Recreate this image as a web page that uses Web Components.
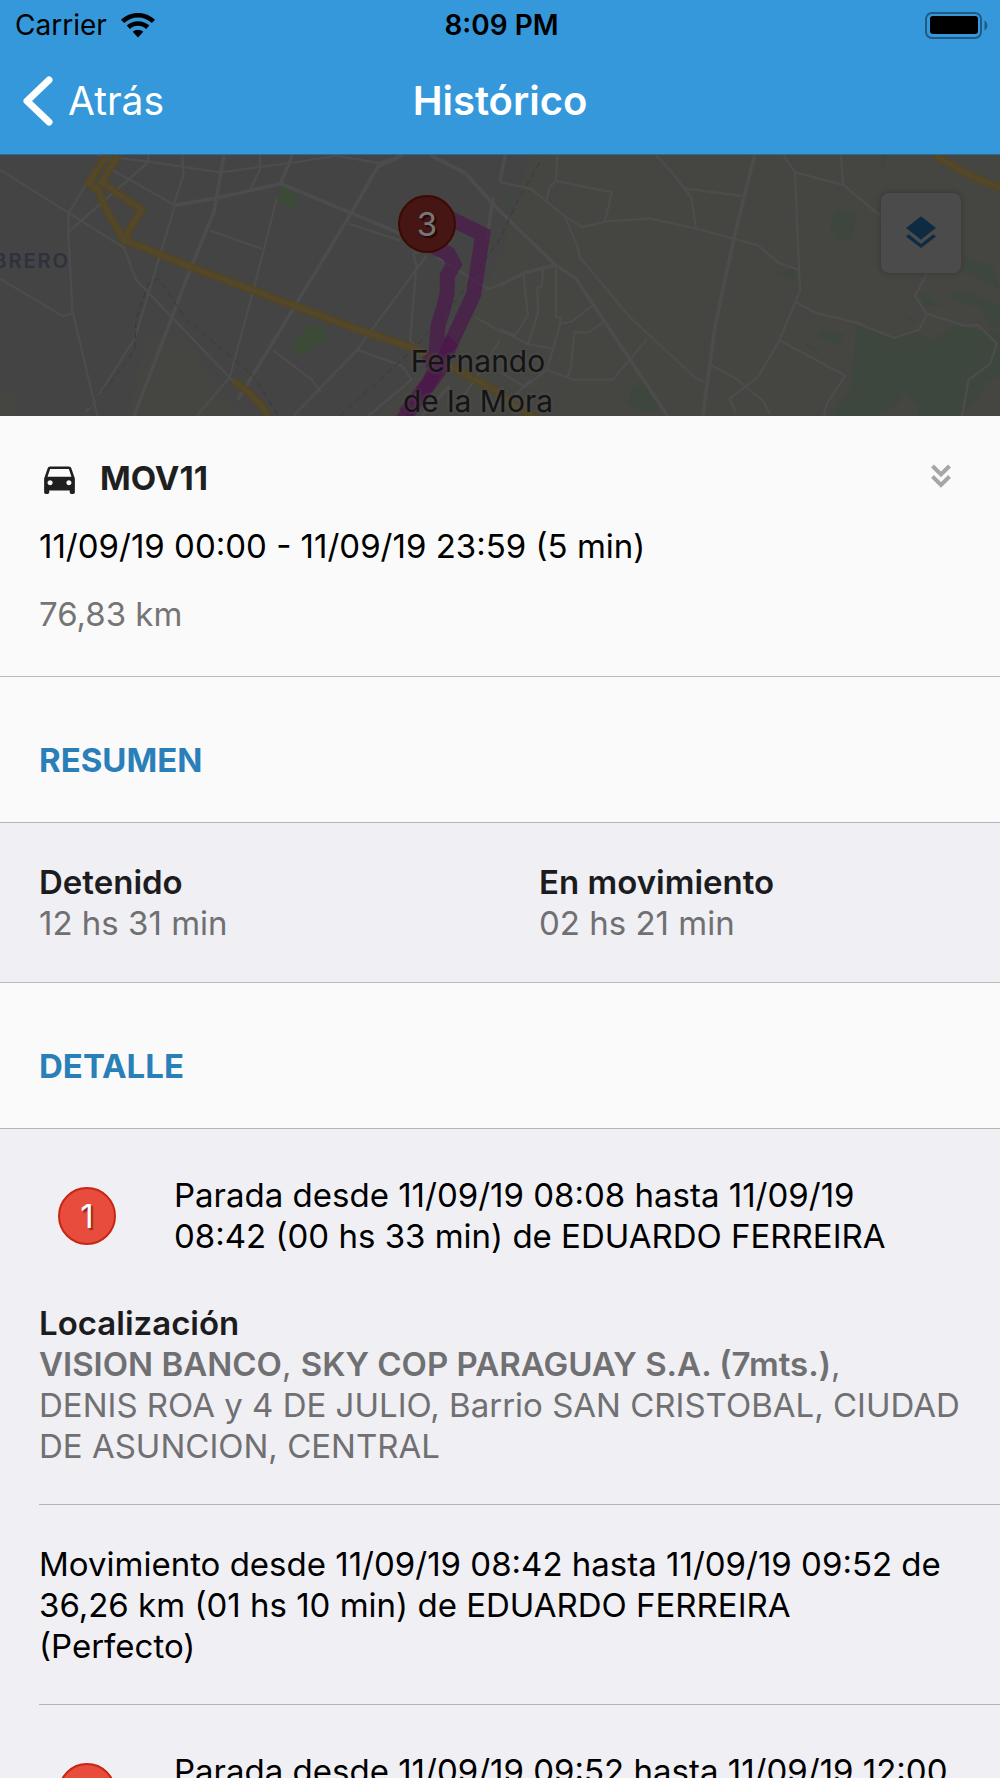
<!DOCTYPE html>
<html lang="es">
<head>
<meta charset="utf-8">
<meta name="viewport" content="width=device-width, initial-scale=1">
<title>Histórico</title>
<style>
    body {
        margin: 0;
        background: #efeff4;
        color: #000;
        font-family: Inter, "Liberation Sans", sans-serif;
        font-size: 33px;
        line-height: 41px;
    }
</style>
</head>
<body>
<history-page>
    <status-bar slot="header" carrier="Carrier" time="8:09 PM"></status-bar>
    <nav-header slot="header" back="Atrás">Histórico</nav-header>
    <route-map slot="map"></route-map>

    <trip-summary>
        MOV11
        <span slot="period">11/09/19 00:00 - 11/09/19 23:59 (5 min)</span>
        <span slot="distance">76,83 km</span>
    </trip-summary>

    <section-title>RESUMEN</section-title>
    <stat-row>
        <stat-item label="Detenido">12 hs 31 min</stat-item>
        <stat-item label="En movimiento">02 hs 21 min</stat-item>
    </stat-row>

    <section-title>DETALLE</section-title>
    <stop-item number="1">
        Parada desde 11/09/19 08:08 hasta 11/09/19<br>
        08:42 (00 hs 33 min) de EDUARDO FERREIRA
        <stat-item slot="location" label="Localización"><b>VISION BANCO</b>, <b>SKY COP PARAGUAY S.A. (7mts.)</b>,<br>
            DENIS ROA y 4 DE JULIO, Barrio SAN CRISTOBAL, CIUDAD DE ASUNCION, CENTRAL</stat-item>
    </stop-item>
    <move-item>
        Movimiento desde 11/09/19 08:42 hasta 11/09/19 09:52 de
        36,26 km (01 hs 10 min) de EDUARDO FERREIRA<br>
        (Perfecto)
    </move-item>
    <stop-item number="2">Parada desde 11/09/19 09:52 hasta 11/09/19 12:00</stop-item>
</history-page>

<script>
// attaches an open shadow root filled with the given markup
class BaseElement extends HTMLElement {
    constructor() {
        super();
        const template = document.createElement("template");
        template.innerHTML = this.constructor.markup;
        this.attachShadow({ mode: "open" });
        this.shadowRoot.appendChild(template.content.cloneNode(true));
    }

    // copies an attribute into the element with the same id
    fill(name) {
        this.shadowRoot.getElementById(name).textContent = this.getAttribute(name) || "";
    }
}

class HistoryPage extends BaseElement {
    static markup = `
        <style>
            :host {
                display: flex;
                flex-direction: column;
                height: 100vh;
                overflow: hidden;
            }
            header {
                background: #3498db;
                border-bottom: 1px solid #296d98;
            }
            main {
                flex: 1;
                min-height: 0;
                overflow-y: auto;
                scrollbar-width: none;
                background: #efeff4;
            }
        </style>
        <header><slot name="header"></slot></header>
        <slot name="map"></slot>
        <main><slot></slot></main>
    `;
}

class StatusBar extends BaseElement {
    static markup = `
        <style>
            :host {
                display: grid;
                grid-template-columns: 1fr auto 1fr;
                align-items: center;
                height: 50px;
                padding: 0 12px 0 15px;
                font-size: 28px;
                line-height: 34px;
            }
            .left {
                display: flex;
                align-items: center;
                gap: 14px;
            }
            #time {
                font-weight: 600;
            }
            .battery {
                justify-self: end;
            }
            svg {
                display: block;
            }
        </style>
        <div class="left">
            <span id="carrier"></span>
            <svg width="34" height="25" viewBox="0 0 34 25">
                <path d="M17 0C10.500 0 4.600 2.500 0 6.700L3.200 10A20 20 0 0 1 30.800 10L34 6.700C29.400 2.500 23.500 0 17 0z"/>
                <path d="M17 8.200c-4.400 0-8.300 1.700-11.300 4.400l3.200 3.300a12 12 0 0 1 16.200 0l3.200-3.300C25.300 9.900 21.400 8.200 17 8.200z"/>
                <path d="M17 16.700c-2 0-3.900.8-5.300 2L17 24.500l5.300-5.800c-1.400-1.200-3.300-2-5.300-2z"/>
            </svg>
        </div>
        <span id="time"></span>
        <svg class="battery" width="63" height="27" viewBox="0 0 63 27">
            <rect x="1" y="1" width="55" height="25" rx="6" fill="none" stroke="#1f5b83" stroke-width="2"/>
            <rect x="5" y="4" width="48" height="18" rx="3"/>
            <path d="M59.500 8.500c3.800 2 3.800 8 0 10z" fill="#1f5b83"/>
        </svg>
    `;

    connectedCallback() {
        this.fill("carrier");
        this.fill("time");
    }
}

class NavHeader extends BaseElement {
    static markup = `
        <style>
            :host {
                display: grid;
                grid-template-columns: 1fr auto 1fr;
                align-items: center;
                height: 104px;
                box-sizing: border-box;
                padding: 0 23px 3px;
                color: #fff;
                font-size: 39px;
                line-height: 50px;
            }
            button {
                display: flex;
                align-items: center;
                gap: 15px;
                justify-self: start;
                padding: 0;
                border: 0;
                background: none;
                color: inherit;
                font: inherit;
            }
            h1 {
                margin: 0;
                font-size: 40px;
                font-weight: 600;
            }
        </style>
        <button type="button">
            <svg width="30" height="50" viewBox="0 0 30 50"><path d="M26 4 4 25l22 21" fill="none" stroke="#fff" stroke-width="7" stroke-linecap="round" stroke-linejoin="round"/></svg>
            <span id="back"></span>
        </button>
        <h1><slot></slot></h1>
    `;

    connectedCallback() {
        this.fill("back");
    }
}

class StopMarker extends BaseElement {
    static markup = `
        <style>
            :host {
                display: flex;
                align-items: center;
                justify-content: center;
                box-sizing: border-box;
                width: 58px;
                height: 58px;
                border: 2px solid #c72617;
                border-radius: 50%;
                background: #e74c3c;
                color: #fff;
                text-shadow: 2px 2px 1px #8c2a20;
            }
        </style>
        <slot></slot>
    `;
}

class RouteMap extends BaseElement {
    static markup = `
        <style>
            :host {
                display: block;
                position: relative;
                height: 261px;
                overflow: hidden;
                background: #444;
            }
            .tiles {
                display: block;
                width: 100%;
                height: 100%;
            }
            .land {
                fill: #454542;
            }
            .roads {
                fill: none;
                stroke: #4c4c4c;
                stroke-width: 7;
                stroke-linejoin: round;
            }
            .wide {
                stroke-width: 11;
            }
            .rail {
                fill: none;
                stroke: #393939;
                stroke-width: 3;
                stroke-dasharray: 18 14;
            }
            .green {
                fill: #3e473d;
            }
            .park {
                fill: #3c4a38;
            }
            .highway {
                fill: none;
                stroke: #5a4517;
                stroke-width: 22;
            }
            .highway.inner {
                stroke: #50482f;
                stroke-width: 12;
            }
            .route {
                fill: none;
                stroke: #4c124c;
                stroke-opacity: .6;
                stroke-width: 45;
            }
            .label {
                position: absolute;
                text-align: center;
                white-space: nowrap;
            }
            .town {
                left: 50%;
                top: 186px;
                width: 200px;
                margin-left: -122px;
                color: #141414;
                font-size: 30px;
                line-height: 40px;
                text-shadow: 0 0 4px #555;
            }
            .district {
                right: calc(100% - 70px);
                top: 92px;
                color: #2d323d;
                font-size: 20px;
                font-weight: 600;
                letter-spacing: 2px;
                line-height: 28px;
            }
            stop-marker {
                position: absolute;
                left: calc(50% - 102px);
                top: 40px;
                border-color: #3f0903;
                background: #451613;
                color: #777;
                text-shadow: 2px 2px 1px #240807;
            }
            button {
                position: absolute;
                right: 39px;
                top: 38px;
                width: 80px;
                height: 80px;
                padding: 0;
                border: 0;
                border-radius: 8px;
                background: #4b4b4b;
                box-shadow: 0 0 6px rgba(0, 0, 0, .25);
            }
            button svg {
                display: block;
                margin: auto;
            }
        </style>
        <svg class="tiles" viewBox="0 14 3000 783" preserveAspectRatio="xMidYMid slice">
            <path class="land" d="M1585 14h1415v783H1130l110-110 180-190 90-210z"/>
            <path class="land" d="M440 560h110l90 120 80 117H380zM0 730l40-20 20 87H0z"/>
            <path class="park" d="M840 108l52 18-8 50-50-20zM925 528l45-6 12 42-78 52-26-14 8-36z"/>
            <g class="green">
                <path d="M2510 180l60 6-14 74-40 18-26-44zM2890 320l90 30 20 68-110-60zM2845 435l45-15 110 50v55l-30 10-30-68-50-5zM2700 475l50 42-30-10zM2765 428l60 38-55 2z"/>
                <path d="M2570 525l110 40 70-22 40 32 80-52 70 20 50-3 58 60-20 50-70 50-25 50-60 47h-60l-60 0 0-25-40-50-20 40-60 35h-140l60-90z"/>
                <path d="M2330 368l52-12 2 36zM2462 538l68 12-12 30-62-20zM2408 575l50 24-10 12zM1925 690l55 80-34 18-62-28 12-45zM1502 140l28-6v34zM2645 14h20l-22 40z"/>
            </g>
            <g class="roads">
                <path d="M0 58l372 234 36 96 310 324M0 385l188 112 30-8M205 190v60l12 230 75 317M205 190l75-125 50-40M205 245l240-210V14M290 14l155 20 215 32 240-32 110-18 125 22 70-24"/>
                <path d="M520 165l30-90-3-61M330 55l195 110-120 398-125 197-35 37M750 118l30-60V14M830 145 755 440 688 685M630 240l155 55M690 680 590 797M820 600l115 88 28 38M1250 340l-20 230 60 60M1240 310l10 40M1075 600l130 46 30 42-130 109"/>
                <path d="M1280 315 1070 600 880 797M1045 220l155 50M1310 320l155 96 35-13M1425 500l75 42M1500 570l-110 170"/>
                <path d="M1500 95l92 20 105 85 50 30 70-16 130-10 140 30 115 32 70 18 65 54 58 20M1640 150l8-38 20-20 168 34-22 88M1668 92l4-78M1967 14l54 58 53 70 14 92M2058 115l170 22"/>
                <path d="M1695 200l38 90 6 30 150 180 200 185 25 10M1570 370l14 125-38 60-46-18M1630 355l-6 55-12 2 2 75-30 95M1668 345v155l14 3-2 20-20 70-20 65 80 30h118l45-52 57-68M1500 540l86 42 74 12M1682 520l34-6 62-50M1810 515l-45 32-42-2-10 105-10 28M1500 665l75 44 65-50M1590 690l-60 60"/>
                <path d="M2350 14l35 52 15 355-62 150-65 110-85 65 20 40M2385 66l145 38-8-90M2530 104l116 96M2386 455l60 32 122 30 115 46 74-25 24-46-36-56 38-70M2781 490l110 36 42-2 58 56-20 60-65 48-20 109M2338 570l198 106-58 88-6 33M2126 640l80 44 84 68 20 40"/>
            </g>
            <g class="roads wide">
                <path d="M672 14l-30 170-70 170-170 443M522 165l120-20 200-45 360 150 50 60M842 100l35-86M1210 14l-76 34-80 140-340 560M1290 14l105 54 105 115 168 162 60 40 275 412M1480 140l-20 130M1265 797l85-90M1500 405l70-36 98-25M1500 94 1516 14M2264 14l-60 240-58 270-38 273"/>
            </g>
            <path class="rail" d="M245 797l110-130 50-70 3-90 38-110 30-12 80 120 190 160 20 22 70 110M1020 797l220-200 130-150 130-180 50-110 76-134"/>
            <path class="highway" d="M322 14 265 98l28 20 32 72 46 78 54-90-120-82 50-82M371 268l209 85 480 180 180 60 110 55 150 80 35 35 80 45M700 690l45 36 40 40 20 31M2805 14l100 60 95 38"/>
            <path class="highway inner" d="M322 14 265 98l28 20 32 72 46 78 54-90-120-82 50-82M371 268l209 85 480 180 180 60 110 55 150 80 35 35 80 45M700 690l45 36 40 40 20 31M2805 14l100 60 95 38"/>
            <path class="route" d="M1300 180l148 72-27 180-70 150-35 80-110 150"/>
            <path class="route" d="M1260 270l85 40 17 32-20 35v50l-12 48-16 50-6 80-10 50M1360 570l-80 70M1330 610l-45 90-70 90"/>
        </svg>
        <div class="label district">BRERO</div>
        <div class="label town">Fernando<br>de la Mora</div>
        <stop-marker>3</stop-marker>
        <button type="button" aria-label="Capas">
            <svg width="40" height="40" viewBox="0 0 24 24" fill="#0d2c43"><path d="m11.990 18.540-7.370-5.730L3 14.070l9 7 9-7-1.630-1.270-7.380 5.740zM12 16l7.360-5.730L21 9l-9-7-9 7 1.630 1.270L12 16z"/></svg>
        </button>
    `;
}

class TripSummary extends BaseElement {
    static markup = `
        <style>
            :host {
                display: flex;
                flex-direction: column;
                gap: 27px;
                padding: 42px 39px 41px;
                background: #fafafa;
                border-bottom: 1px solid #b9b9bb;
            }
            .title {
                display: flex;
                align-items: center;
                gap: 20px;
                color: #1f1f1f;
            }
            h2 {
                flex: 1;
                margin: 0;
                font-size: inherit;
                font-weight: 700;
            }
            button {
                align-self: flex-start;
                padding: 0 10px;
                border: 0;
                background: none;
            }
            svg {
                display: block;
            }
            .distance {
                color: #757575;
            }
        </style>
        <div class="title">
            <svg width="41" height="41" viewBox="0 0 24 24" fill="#1f1f1f"><path d="M18.920 6.010C18.720 5.420 18.160 5 17.500 5h-11c-.66 0-1.210.42-1.420 1.010L3 12v8c0 .55.45 1 1 1h1c.55 0 1-.45 1-1v-1h12v1c0 .55.45 1 1 1h1c.55 0 1-.45 1-1v-8l-2.080-5.990zM6.500 16c-.83 0-1.500-.67-1.500-1.500S5.670 13 6.500 13s1.500.67 1.500 1.500S7.330 16 6.500 16zm11 0c-.83 0-1.500-.67-1.500-1.500s.67-1.500 1.500-1.500 1.500.67 1.500 1.500-.67 1.500-1.500 1.500zM5 11l1.500-4.500h11L19 11H5z"/></svg>
            <h2><slot></slot></h2>
            <button type="button" aria-label="Contraer">
                <svg width="20" height="34" viewBox="0 0 20 34"><path d="M1.500 8l8.500 8.500L18.500 8M1.500 18.500l8.500 8.500 8.500-8.500" fill="none" stroke="#a6a6a6" stroke-width="4"/></svg>
            </button>
        </div>
        <div><slot name="period"></slot></div>
        <div class="distance"><slot name="distance"></slot></div>
    `;
}

class SectionTitle extends BaseElement {
    static markup = `
        <style>
            :host {
                display: block;
                padding: 63px 39px 41px;
                background: #fafafa;
                border-bottom: 1px solid #b5b5b9;
                color: #2980b9;
            }
            h3 {
                margin: 0;
                font-size: inherit;
                font-weight: 700;
            }
        </style>
        <h3><slot></slot></h3>
    `;
}

class StatRow extends BaseElement {
    static markup = `
        <style>
            :host {
                display: grid;
                grid-template-columns: 1fr 1fr;
                padding: 39px 0 38px;
                border-bottom: 1px solid #b9b9bb;
            }
            ::slotted(stat-item) {
                padding: 0 39px;
            }
        </style>
        <slot></slot>
    `;
}

class StatItem extends BaseElement {
    static markup = `
        <style>
            :host {
                display: block;
                color: #707072;
            }
            #label {
                color: #1c1c1e;
                font-weight: 600;
            }
            ::slotted(b) {
                font-weight: 600;
            }
        </style>
        <div id="label"></div>
        <slot></slot>
    `;

    connectedCallback() {
        this.fill("label");
    }
}

class StopItem extends BaseElement {
    static markup = `
        <style>
            :host {
                display: block;
                margin-left: 39px;
                padding: 46px 30px 37px 0;
                border-bottom: 1px solid #b5b5b9;
            }
            .head {
                display: grid;
                grid-template-columns: 96px 1fr;
                gap: 39px;
                min-height: 82px;
            }
            stop-marker {
                align-self: center;
                justify-self: center;
            }
            ::slotted(stat-item) {
                margin-top: 46px;
            }
        </style>
        <div class="head">
            <stop-marker><span id="number"></span></stop-marker>
            <div><slot></slot></div>
        </div>
        <slot name="location"></slot>
    `;

    connectedCallback() {
        this.fill("number");
    }
}

class MoveItem extends BaseElement {
    static markup = `
        <style>
            :host {
                display: block;
                margin-left: 39px;
                padding: 39px 30px 37px 0;
                border-bottom: 1px solid #b5b5b9;
            }
        </style>
        <slot></slot>
    `;
}

customElements.define("history-page", HistoryPage);
customElements.define("status-bar", StatusBar);
customElements.define("nav-header", NavHeader);
customElements.define("stop-marker", StopMarker);
customElements.define("route-map", RouteMap);
customElements.define("trip-summary", TripSummary);
customElements.define("section-title", SectionTitle);
customElements.define("stat-row", StatRow);
customElements.define("stat-item", StatItem);
customElements.define("stop-item", StopItem);
customElements.define("move-item", MoveItem);
</script>
</body>
</html>
